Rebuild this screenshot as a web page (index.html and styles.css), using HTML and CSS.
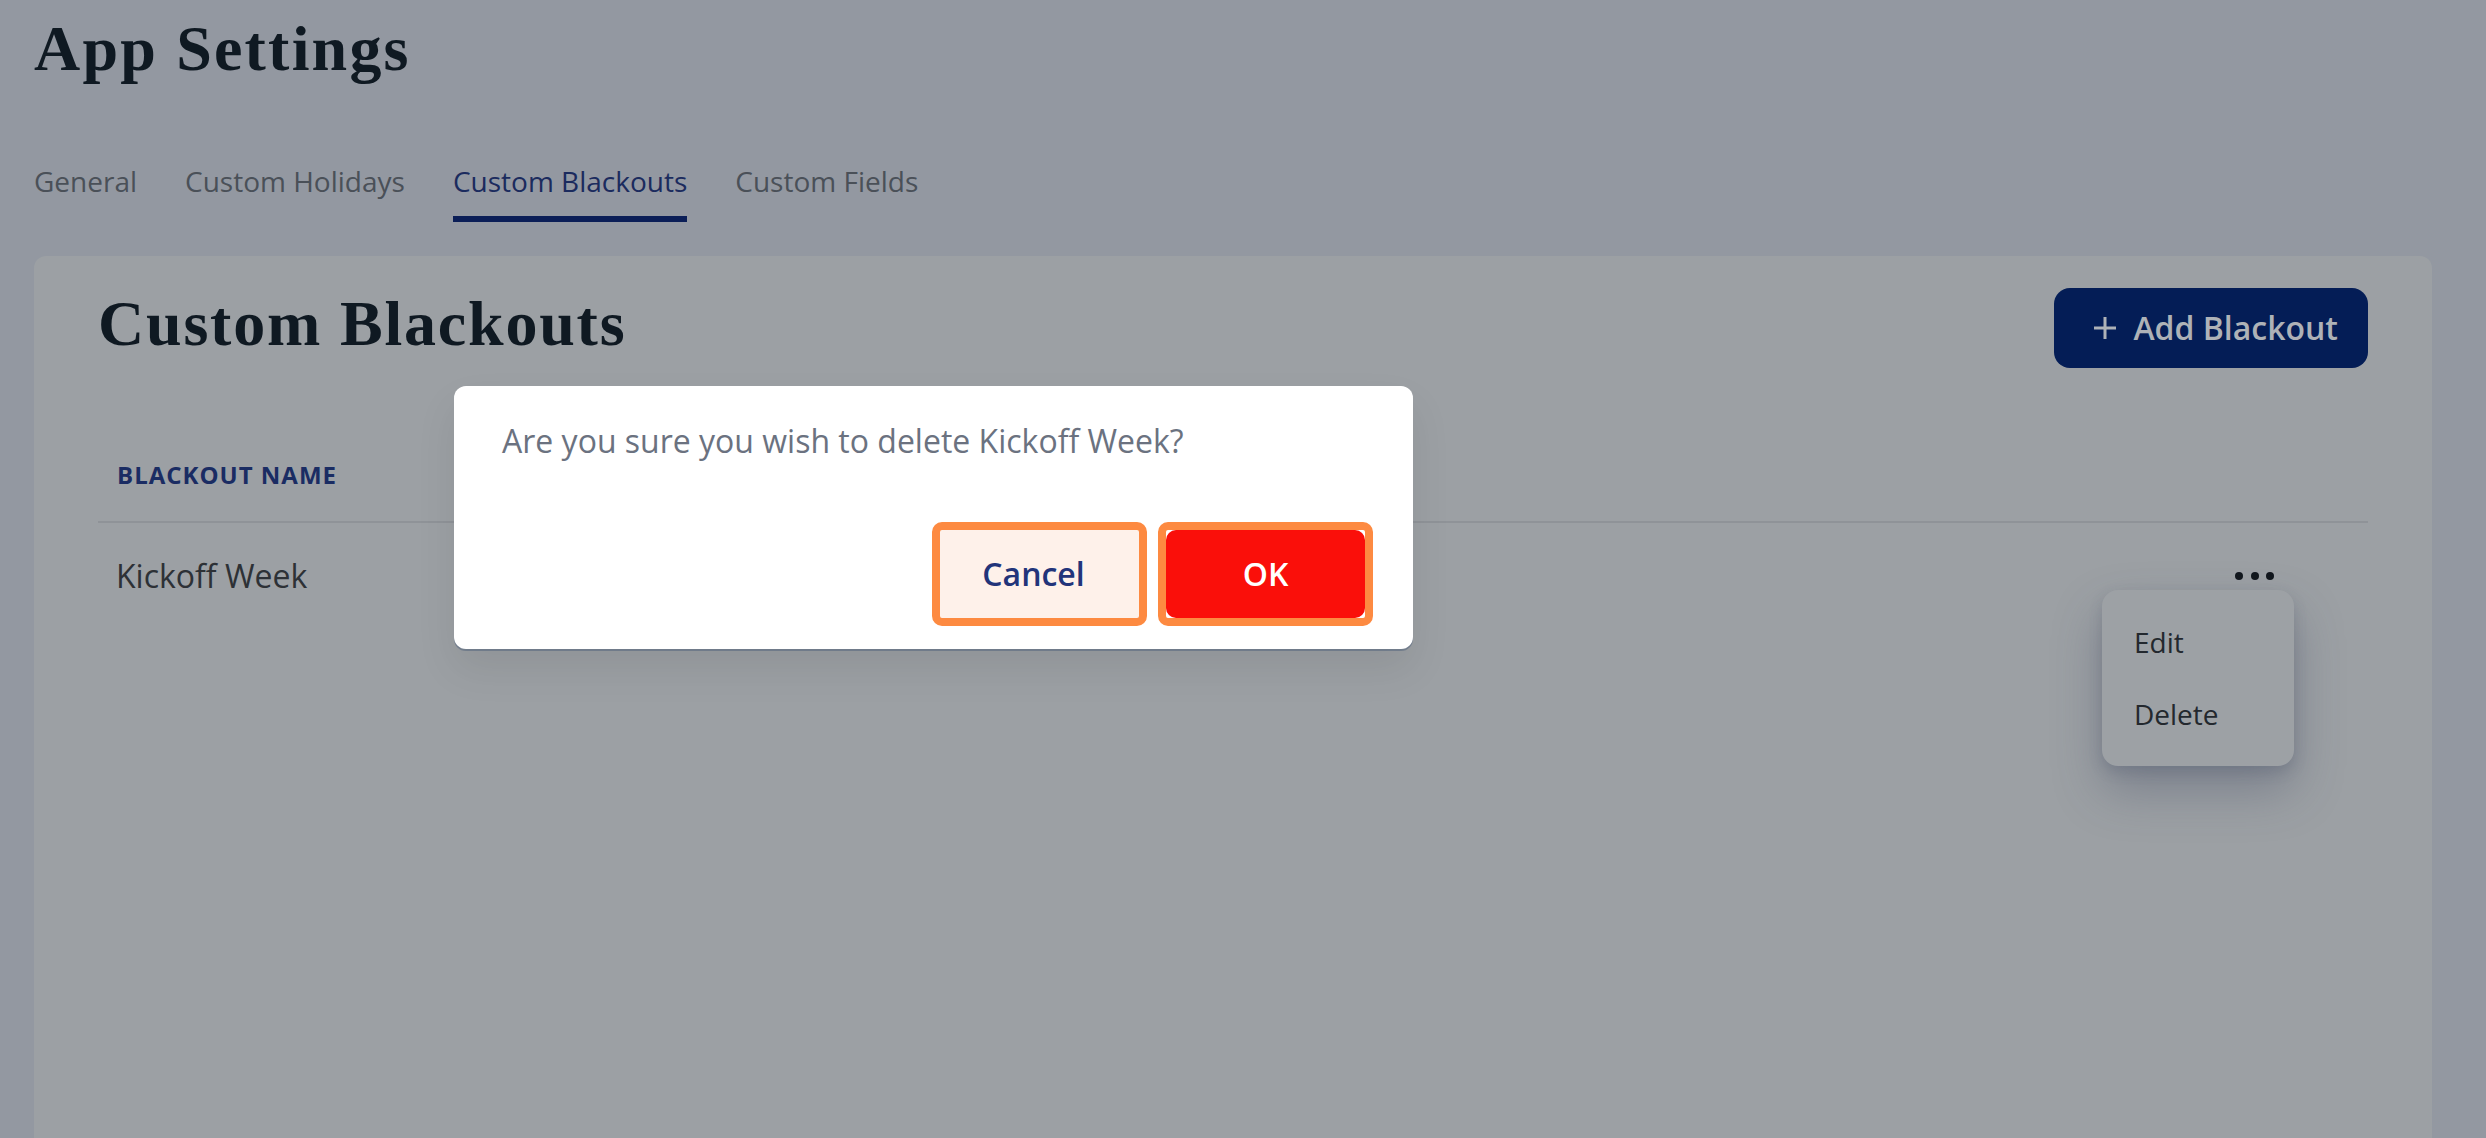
FILE: index.html
```html
<!DOCTYPE html>
<html lang="en">
<head>
<meta charset="utf-8">
<title>App Settings</title>
<link rel="stylesheet" href="styles.css">
</head>
<body>
<div class="page">
  <h1 class="page-title">App Settings</h1>
  <nav class="tabs">
    <a class="tab">General</a>
    <a class="tab">Custom Holidays</a>
    <a class="tab tab-active">Custom Blackouts</a>
    <a class="tab">Custom Fields</a>
  </nav>
  <section class="card">
    <header class="card-header">
      <h2 class="card-title">Custom Blackouts</h2>
      <button class="btn-add">
        <svg class="plus" viewBox="0 0 24 24" width="24" height="24"><path d="M12 1v22M1 12h22" stroke="currentColor" stroke-width="3" fill="none"/></svg>
        <span>Add Blackout</span>
      </button>
    </header>
    <table class="table">
      <thead>
        <tr><th class="th-name">Blackout Name</th><th class="th-actions"></th></tr>
      </thead>
      <tbody>
        <tr>
          <td class="td-name">Kickoff Week</td>
          <td class="td-actions">
            <div class="menu-wrap">
              <button class="dots"><span class="dot"></span><span class="dot"></span><span class="dot"></span></button>
              <div class="menu">
                <div class="menu-item">Edit</div>
                <div class="menu-item">Delete</div>
              </div>
            </div>
          </td>
        </tr>
      </tbody>
    </table>
  </section>
</div>
<div class="dialog">
  <p class="dialog-text">Are you sure you wish to delete Kickoff Week?</p>
  <div class="dialog-actions">
    <button class="btn btn-cancel">Cancel</button>
    <button class="btn btn-ok"><span class="btn-ok-inner">OK</span></button>
  </div>
</div>
</body>
</html>
```
FILE: styles.css
```css
* { box-sizing: border-box; }
html, body { margin: 0; padding: 0; }
body {
  background: #9398a1;
  font-family: "Open Sans", "Noto Sans", sans-serif;
  overflow: hidden;
  height: 1138px;
}
.page {
  padding: 17px 54px 0 34px;
}
.page-title {
  margin: 0;
  font-family: "Liberation Serif", "Times New Roman", serif;
  font-weight: 700;
  font-size: 64px;
  line-height: 64px;
  letter-spacing: 2.2px;
  color: #0f1922;
}
.tabs {
  display: flex;
  gap: 48px;
  margin-top: 80px;
}
.tab {
  font-size: 28px;
  line-height: 40px;
  padding-bottom: 15px;
  border-bottom: 6px solid transparent;
  color: #4a5058;
}
.tab-active {
  color: #1b2b5e;
  border-bottom-color: #0b1e57;
}
.card {
  margin-top: 34px;
  background: #9ca0a4;
  border-radius: 12px 12px 0 0;
  padding: 32px 64px 0;
  min-height: 900px;
}
.card-header {
  display: flex;
  justify-content: space-between;
  align-items: flex-start;
}
.card-title {
  margin: 4px 0 0;
  font-family: "Liberation Serif", "Times New Roman", serif;
  font-weight: 700;
  font-size: 64px;
  line-height: 64px;
  letter-spacing: 1.8px;
  color: #0f1922;
}
.btn-add {
  display: flex;
  align-items: center;
  height: 80px;
  padding: 0 30px 0 39px;
  border: 0;
  border-radius: 16px;
  background: #041d56;
  color: #aeb2b7;
  font-family: "Open Sans", sans-serif;
  font-weight: 600;
  font-size: 32px;
  line-height: 48px;
  white-space: nowrap;
}
.plus { margin-right: 16px; flex: none; }
.table {
  width: 100%;
  margin-top: 61px;
  border-collapse: collapse;
}
.th-name {
  text-align: left;
  font-size: 24px;
  line-height: 32px;
  font-weight: 700;
  letter-spacing: 1px;
  text-transform: uppercase;
  color: #1a2c63;
  padding: 30px 18px 30px 19px;
  border-bottom: 2px solid #8f9398;
}
.th-actions { border-bottom: 2px solid #8f9398; }
.td-name {
  font-size: 32px;
  line-height: 48px;
  color: #2d3136;
  padding: 29px 18px;
  vertical-align: top;
}
.td-actions {
  text-align: right;
  padding: 29px 94px 0 0;
  vertical-align: top;
}
.menu-wrap {
  position: relative;
  display: inline-flex;
  align-items: center;
  height: 48px;
  vertical-align: top;
}
.dots {
  display: flex;
  gap: 7.5px;
  padding: 0;
  margin: 0;
  border: 0;
  background: none;
}
.dot {
  width: 8px;
  height: 8px;
  border-radius: 50%;
  background: #12171d;
}
.menu {
  position: absolute;
  top: 38px;
  right: -20px;
  width: 192px;
  padding: 16px 0;
  background: #9da1a5;
  border-radius: 16px;
  text-align: left;
  box-shadow: 0 24px 48px rgba(60, 70, 95, 0.35), 0 6px 14px rgba(60, 70, 95, 0.2);
}
.menu-item {
  padding: 16px 32px;
  font-size: 28px;
  line-height: 40px;
  color: #23282e;
}
.dialog {
  position: absolute;
  left: 454px;
  top: 386px;
  width: 959px;
  background: #fff;
  border-radius: 12px;
  padding: 31px 40px 23px 48px;
  box-shadow: 0 2px 0 rgba(70, 90, 120, 0.45), 0 20px 40px rgba(0, 0, 0, 0.08);
}
.dialog-text {
  margin: 0;
  font-size: 32px;
  line-height: 48px;
  color: #6b7280;
}
.dialog-actions {
  display: flex;
  justify-content: flex-end;
  gap: 11px;
  margin-top: 57px;
}
.btn {
  width: 215px;
  height: 104px;
  border: 8px solid #fd8a41;
  border-radius: 10px;
  font-family: "Open Sans", sans-serif;
  font-weight: 600;
  font-size: 32px;
  line-height: 48px;
  padding: 0;
}
.btn-cancel {
  background: #fef1ea;
  color: #22347a;
  padding-right: 12px;
}
.btn-ok {
  background: #fff;
  color: #fff;
}
.btn-ok-inner {
  display: flex;
  align-items: center;
  justify-content: center;
  width: 100%;
  height: 100%;
  background: #fa0f0a;
  border-radius: 10px;
}
```
